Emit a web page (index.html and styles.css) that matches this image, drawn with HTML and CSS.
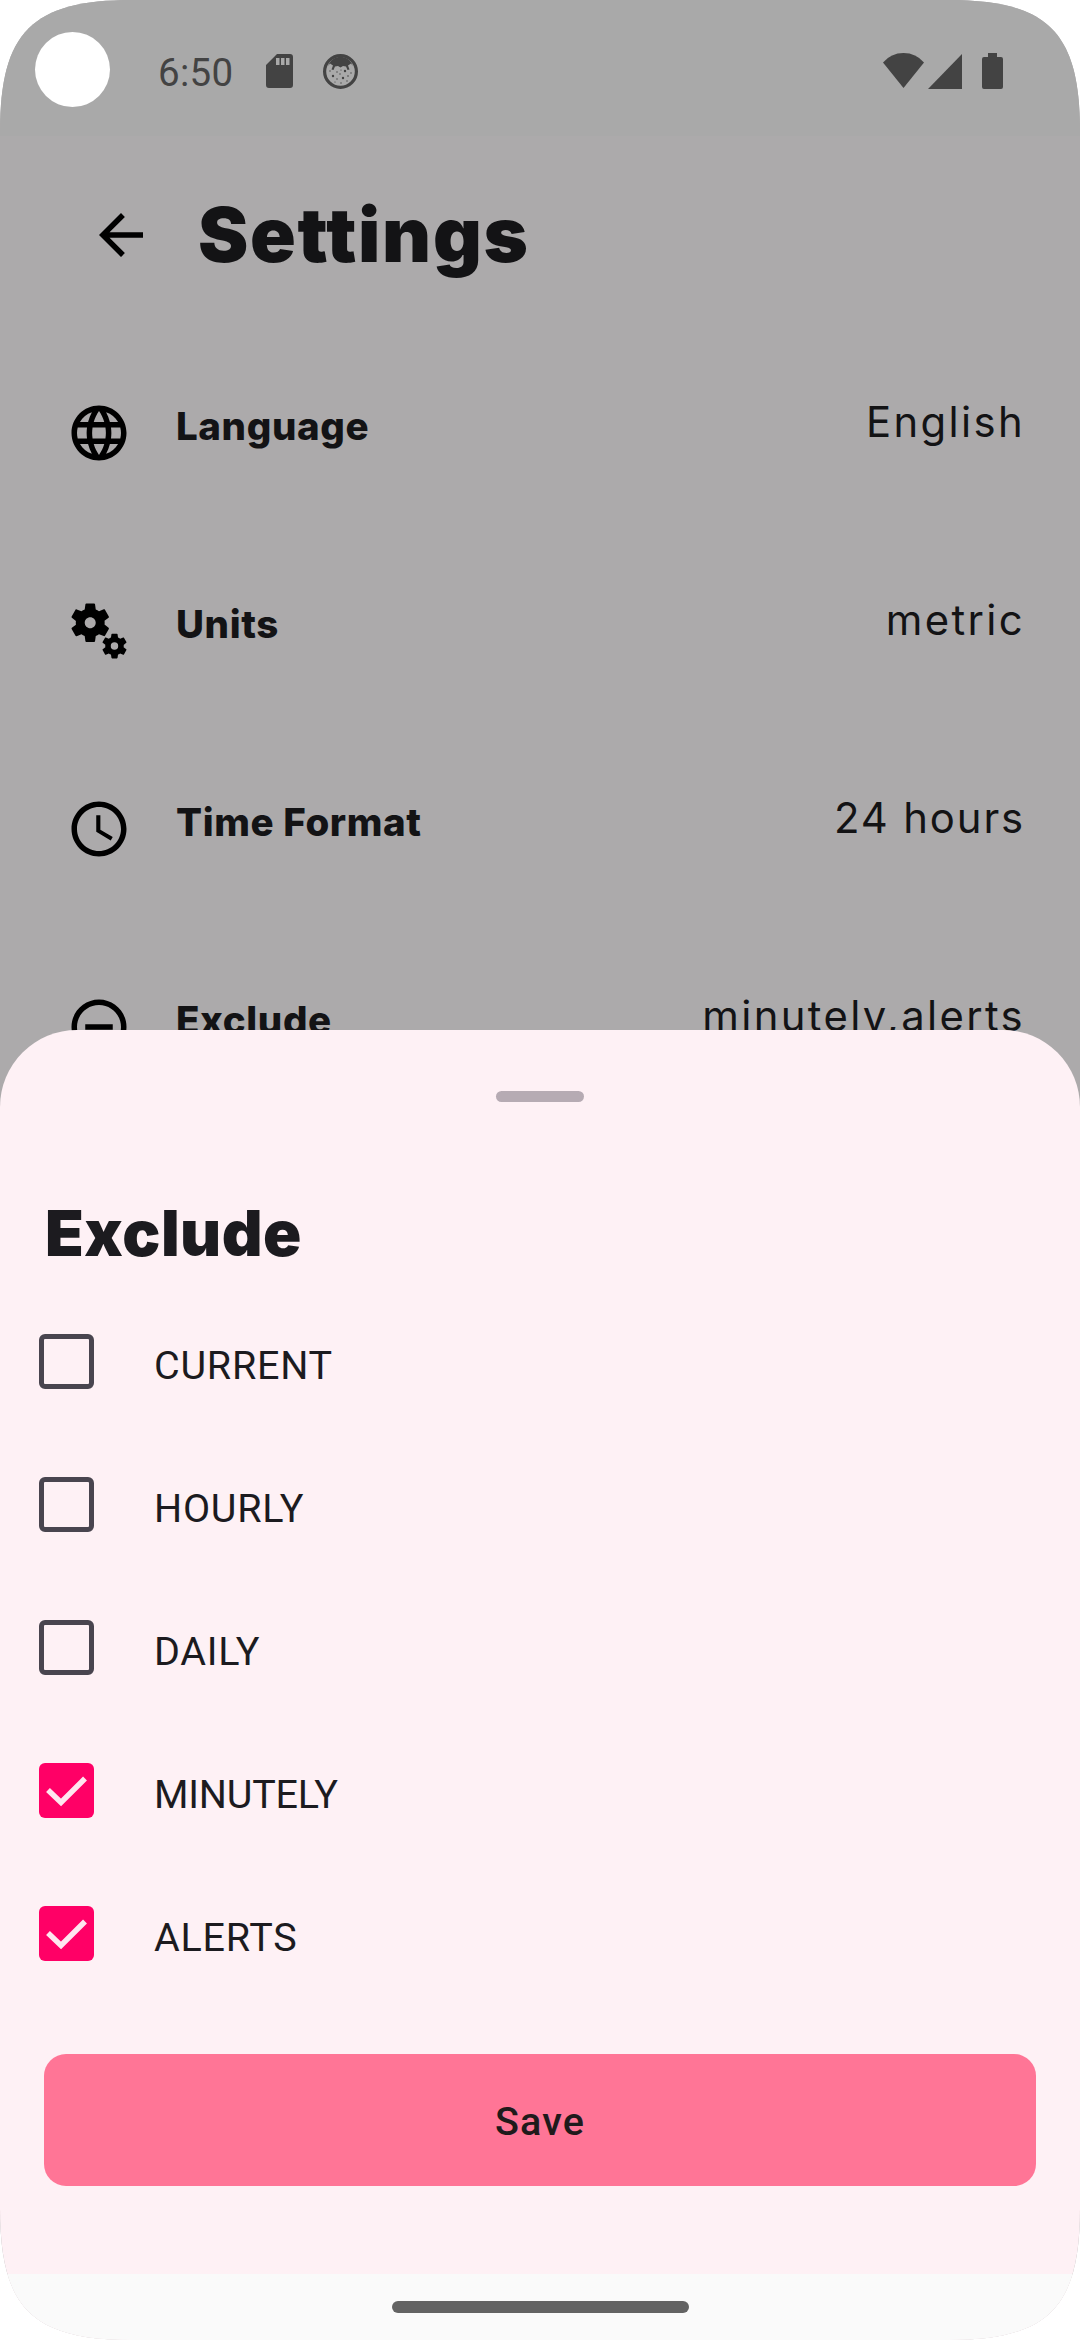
FILE: index.html
```html
<!DOCTYPE html>
<html lang="en">
<head>
<meta charset="utf-8">
<title>Settings</title>
<link rel="stylesheet" href="styles.css">
</head>
<body>
<div class="screen">
  <div class="status-bar">
    <span class="camera"></span>
    <span class="clock">6:50</span>
    <svg class="sd" viewBox="0 0 27 34"><path fill-rule="evenodd" d="M11 0H24a3 3 0 0 1 3 3V31a3 3 0 0 1-3 3H3a3 3 0 0 1-3-3V11ZM10 4v7h3.500V4ZM15 4v7h3.500V4ZM20 4v7h3.500V4Z"/></svg>
    <svg class="face" viewBox="0 0 35 35"><circle cx="17.500" cy="17.500" r="15.900" fill="none" stroke="#434343" stroke-width="3.200"/><path d="M5 12C8 5 12 3 17.500 3S27 5 30 12L28 9.500 25 11.500 26.500 15.500 24.500 16 23 12.500 20 12 17.500 13.500 15 12 12 12.500 10.500 16 8.500 15.500 10 11.500 7 9.500Z"/><g><circle cx="10" cy="22" r="1.200"/><circle cx="22" cy="17" r="1.200"/><circle cx="20" cy="24" r="1.200"/><circle cx="14" cy="18" r=".7"/><circle cx="17" cy="20" r=".7"/><circle cx="14" cy="25" r=".7"/><circle cx="25" cy="22" r=".8"/><circle cx="7" cy="17" r=".7"/><circle cx="18" cy="29" r=".7"/><circle cx="28" cy="19" r=".7"/><circle cx="12" cy="28" r=".6"/><circle cx="24" cy="27" r=".7"/><circle cx="18" cy="16" r=".6"/></g></svg>
    <svg class="wifi" viewBox="0 0 41 35"><path d="M0 9.500Q8 0 20.500 0T41 9.500L20.500 35Z"/></svg>
    <svg class="signal" viewBox="0 0 34 35"><path d="M34 0V35H0Z"/></svg>
    <svg class="battery" viewBox="0 0 21 36"><path d="M6 0h9v4h4a2 2 0 0 1 2 2V34a2 2 0 0 1-2 2H2a2 2 0 0 1-2-2V6a2 2 0 0 1 2-2h4Z"/></svg>
  </div>
  <header class="app-bar">
    <svg class="icon" viewBox="0 0 24 24"><path d="M20 11H7.830l5.590-5.590L12 4l-8 8 8 8 1.410-1.410L7.830 13H20v-2z"/></svg>
    <h1>Settings</h1>
  </header>
  <main class="settings">
    <div class="row">
      <svg class="icon" viewBox="0 0 24 24"><path d="M11.990 2C6.470 2 2 6.480 2 12s4.470 10 9.990 10C17.520 22 22 17.520 22 12S17.520 2 11.990 2zm6.930 6h-2.950c-.32-1.250-.78-2.450-1.380-3.560 1.840.63 3.370 1.910 4.330 3.560zM12 4.040c.83 1.200 1.480 2.530 1.910 3.960h-3.820c.43-1.430 1.080-2.760 1.910-3.960zM4.260 14C4.100 13.360 4 12.690 4 12s.1-1.360.26-2h3.380c-.08.66-.14 1.320-.14 2s.06 1.340.14 2H4.260zm.82 2h2.950c.32 1.250.78 2.450 1.380 3.560-1.840-.63-3.370-1.900-4.330-3.560zm2.950-8H5.080c.96-1.660 2.490-2.930 4.330-3.560C8.810 5.550 8.350 6.750 8.030 8zM12 19.960c-.83-1.200-1.480-2.530-1.910-3.960h3.820c-.43 1.430-1.080 2.760-1.910 3.960zM14.340 14H9.660c-.09-.66-.16-1.320-.16-2s.07-1.350.16-2h4.680c.09.65.16 1.320.16 2s-.07 1.340-.16 2zm.25 5.560c.6-1.110 1.060-2.310 1.380-3.560h2.950c-.96 1.650-2.490 2.930-4.330 3.560zM16.360 14c.08-.66.14-1.320.14-2s-.06-1.340-.14-2h3.380c.16.64.26 1.310.26 2s-.1 1.360-.26 2h-3.380z"/></svg>
      <span class="label">Language</span><span class="value">English</span>
    </div>
    <div class="row">
      <svg class="icon" viewBox="0 0 24 24"><path d="M14.170 13.710l1.400-2.420c.09-.15.050-.34-.08-.45l-1.480-1.160c.03-.22.050-.45.050-.68s-.02-.46-.05-.69l1.480-1.160c.13-.11.170-.3.080-.45l-1.400-2.420c-.09-.15-.27-.21-.43-.15L12 4.830c-.36-.28-.75-.51-1.180-.69l-.26-1.850C10.530 2.130 10.380 2 10.210 2h-2.800C7.240 2 7.090 2.130 7.060 2.300L6.800 4.150c-.42.18-.82.410-1.180.69l-1.740-.7c-.16-.06-.34 0-.43.150l-1.400 2.420c-.09.150-.05.340.08.450l1.480 1.160C3.580 8.540 3.560 8.770 3.560 9s.02.460.05.690l-1.480 1.160c-.13.110-.17.300-.08.450l1.400 2.420c.09.150.27.210.43.150l1.740-.7c.36.280.75.510 1.180.69l.26 1.850C7.090 15.870 7.240 16 7.410 16h2.800c.17 0 .32-.13.35-.3l.26-1.850c.42-.18.82-.41 1.180-.69l1.740.7c.16.060.34 0 .43-.15zM8.810 11c-1.100 0-2-.9-2-2s.9-2 2-2 2 .9 2 2-.9 2-2 2zM21.920 18.670l-.96-.74c.02-.14.040-.29.040-.44s-.01-.3-.03-.44l.95-.74c.08-.07.110-.19.050-.29l-.9-1.550c-.05-.1-.17-.13-.28-.1l-1.110.45c-.23-.18-.48-.33-.76-.44l-.17-1.180C18.730 13.080 18.630 13 18.530 13h-1.790c-.11 0-.21.080-.22.190l-.17 1.180c-.27.120-.53.260-.76.440l-1.110-.45c-.1-.04-.22 0-.28.100l-.9 1.550c-.05.100-.04.220.05.290l.95.740a3.150 3.150 0 0 0 0 .88l-.95.740c-.08.070-.11.190-.05.290l.9 1.550c.05.100.17.130.28.100l1.110-.45c.23.180.48.330.76.440l.17 1.180c.02.110.11.190.22.190h1.790c.11 0 .2-.08.220-.19l.17-1.180c.27-.12.53-.26.750-.44l1.120.45c.1.040.22 0 .28-.1l.9-1.550c.06-.09.030-.21-.05-.280zm-4.290.160a1.350 1.350 0 1 1 0-2.700 1.350 1.350 0 0 1 0 2.700z"/></svg>
      <span class="label">Units</span><span class="value">metric</span>
    </div>
    <div class="row">
      <svg class="icon" viewBox="0 0 24 24"><path d="M11.990 2C6.470 2 2 6.480 2 12s4.470 10 9.990 10C17.520 22 22 17.520 22 12S17.520 2 11.990 2zM12 20c-4.420 0-8-3.580-8-8s3.580-8 8-8 8 3.580 8 8-3.580 8-8 8zm.5-13H11v6l5.250 3.150.75-1.230-4.500-2.670z"/></svg>
      <span class="label">Time Format</span><span class="value time">24 hours</span>
    </div>
    <div class="row">
      <svg class="icon" viewBox="0 0 24 24"><path d="M7 11v2h10v-2H7zm5-9C6.480 2 2 6.480 2 12s4.480 10 10 10 10-4.480 10-10S17.520 2 12 2zm0 18c-4.410 0-8-3.590-8-8s3.590-8 8-8 8 3.590 8 8-3.590 8-8 8z"/></svg>
      <span class="label">Exclude</span><span class="value">minutely,alerts</span>
    </div>
  </main>
  <section class="sheet">
    <div class="handle"></div>
    <h2>Exclude</h2>
    <div class="option"><span class="box"></span><span class="name">CURRENT</span></div>
    <div class="option"><span class="box"></span><span class="name">HOURLY</span></div>
    <div class="option"><span class="box"></span><span class="name">DAILY</span></div>
    <div class="option"><span class="box checked"><svg viewBox="0 0 55 55"><path d="M9 27L22 39.500L46 15.500"/></svg></span><span class="name tight">MINUTELY</span></div>
    <div class="option"><span class="box checked"><svg viewBox="0 0 55 55"><path d="M9 27L22 39.500L46 15.500"/></svg></span><span class="name">ALERTS</span></div>
    <button class="save">Save</button>
    <div class="nav"><span class="pill"></span></div>
  </section>
</div>
</body>
</html>
```

FILE: styles.css
```css
* { box-sizing: border-box; }
body { margin: 0; background: #fff; }
.screen {
  position: relative;
  width: 1080px;
  height: 2340px;
  overflow: hidden;
  background: #acaaab;
  color: #131315;
  font-family: Inter, Roboto, sans-serif;
  clip-path: path("M0 132C0 32 32 0 132 0H948C1048 0 1080 32 1080 132V2208C1080 2308 1048 2340 948 2340H132C32 2340 0 2308 0 2208Z");
}
svg { display: block; flex: none; }

.status-bar {
  display: flex;
  align-items: center;
  height: 136px;
  padding: 0 77px 0 35px;
  background: #a9a9a9;
  color: #434343;
  fill: #434343;
}
.camera { width: 75px; height: 75px; margin-top: 3px; border-radius: 50%; background: #fff; }
.clock { width: 107px; margin-left: 48px; margin-top: 9px; font: 400 38.5px/50px Roboto, sans-serif; letter-spacing: .3px; }
.sd { width: 27px; height: 34px; margin: 6px 30px 0 1px; }
.face { width: 35px; height: 35px; margin-top: 6px; }
.wifi { width: 41px; height: 35px; margin: 5px 4px 0 auto; }
.signal { width: 34px; height: 35px; margin: 6px 20px 0 0; }
.battery { width: 21px; height: 36px; margin-top: 6px; }

.app-bar { display: flex; align-items: center; gap: 44px; height: 198px; padding-left: 88px; }
.icon { width: 66px; height: 66px; fill: #000; }
h1 { margin: 0; font-size: 75.600px; line-height: 90px; font-weight: 900; letter-spacing: 1.7px; }

.row { display: flex; align-items: flex-start; height: 198px; padding: 66px 55px 0 66px; }
.label { margin-left: 44px; font-size: 38.500px; line-height: 52px; font-weight: 800; letter-spacing: .6px; }
.value { margin-left: auto; font-size: 41.800px; line-height: 44px; letter-spacing: 2.350px; }
.time { letter-spacing: 1.900px; }

.sheet {
  position: absolute;
  inset: 1030px 0 0 0;
  display: flex;
  flex-direction: column;
  border-radius: 77px 77px 0 0;
  background: #fef1f5;
  color: #1c1b1f;
}
.handle { width: 88px; height: 11px; margin: 61px auto 74px; border-radius: 6px; background: #b6abb3; }
h2 { margin: 0 0 0 45px; font-size: 63.300px; line-height: 114px; font-weight: 900; letter-spacing: .500px; }
.option { display: flex; align-items: center; height: 143px; padding-left: 39px; }
.box { width: 55px; height: 55px; border: 5px solid #49454f; border-radius: 6px; }
.checked { border: 0; background: #ff0066; }
.checked path { fill: none; stroke: #ffe6ef; stroke-width: 5.500; }
.name { margin: 8px 0 0 60px; font: 400 39.500px/50px Roboto, sans-serif; letter-spacing: .75px; }
.tight { letter-spacing: -.2px; }
.save {
  height: 132px;
  margin: 49px 44px 0;
  padding: 3px 0 0;
  border: 0;
  border-radius: 22px;
  background: #ff7596;
  color: #201a1b;
  font: 500 39.500px/50px Roboto, sans-serif;
  letter-spacing: 1.100px;
}
.nav { flex: 1; display: flex; justify-content: center; align-items: flex-start; margin-top: 88px; padding-top: 27px; background: #fafafa; }
.pill { width: 297px; height: 12px; border-radius: 6px; background: #636363; }
```
